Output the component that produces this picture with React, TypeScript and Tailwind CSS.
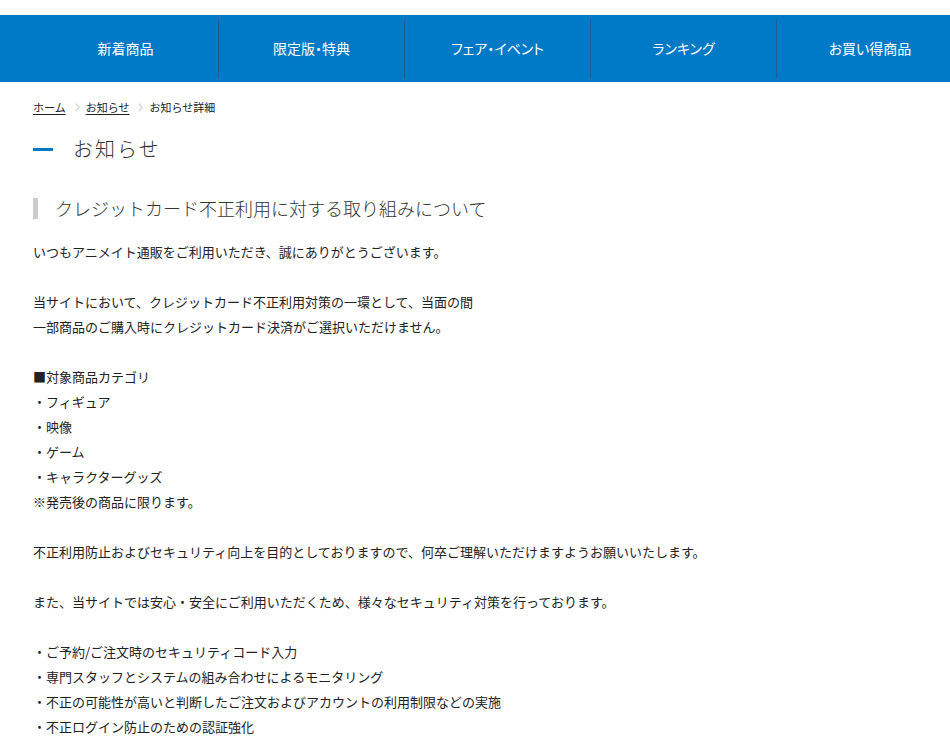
import React from 'react';

const navItems = ['新着商品', '限定版・特典', 'フェア・イベント', 'ランキング', 'お買い得商品'];

const fontStack = { fontFamily: '"Noto Sans CJK JP", "Noto Sans", sans-serif' };

const Chevron: React.FC = () => (
    <svg width="5" height="9" viewBox="0 0 5 9" className="ml-[9px] mr-[6px] shrink-0">
        <path d="M0.8 0.8 L4.2 4.5 L0.8 8.2" fill="none" stroke="#d6d6d6" strokeWidth="1.3" />
    </svg>
);

const bodyLines: string[] = [
    'いつもアニメイト通販をご利用いただき、誠にありがとうございます。',
    '',
    '当サイトにおいて、クレジットカード不正利用対策の一環として、当面の間',
    '一部商品のご購入時にクレジットカード決済がご選択いただけません。',
    '',
    '■対象商品カテゴリ',
    '・フィギュア',
    '・映像',
    '・ゲーム',
    '・キャラクターグッズ',
    '※発売後の商品に限ります。',
    '',
    '不正利用防止およびセキュリティ向上を目的としておりますので、何卒ご理解いただけますようお願いいたします。',
    '',
    'また、当サイトでは安心・安全にご利用いただくため、様々なセキュリティ対策を行っております。',
    '',
    '・ご予約/ご注文時のセキュリティコード入力',
    '・専門スタッフとシステムの組み合わせによるモニタリング',
    '・不正の可能性が高いと判断したご注文およびアカウントの利用制限などの実施',
    '・不正ログイン防止のための認証強化',
];

export default function App() {
    return (
        <div className="min-h-[754px] bg-white text-[#222] overflow-hidden" style={fontStack}>
            {/* global nav */}
            <nav className="mt-[15px] h-[67px] bg-[#0079c6] flex pl-[33px] overflow-hidden">
                {navItems.map((item, i) => (
                    <div
                        key={item}
                        className={`w-[186px] shrink-0 flex items-center justify-center my-[4px] text-white text-[14px] [font-feature-settings:'palt'] ${i < navItems.length - 1 ? 'border-r border-[#1b5e92]' : ''}`}
                    >
                        {item}
                    </div>
                ))}
            </nav>

            <div className="pl-[33px] pr-[20px]">
                {/* breadcrumb */}
                <div className="flex items-center h-[16px] mt-[17px] text-[11px] leading-none text-[#222]">
                    <a className="underline underline-offset-2">ホーム</a>
                    <Chevron />
                    <a className="underline underline-offset-2">お知らせ</a>
                    <Chevron />
                    <span>お知らせ詳細</span>
                </div>

                {/* page heading */}
                <div className="flex items-center mt-[19px] h-[30px]">
                    <span className="block w-[20px] h-[3px] bg-[#0079c6]" />
                    <h1 className="ml-[20px] text-[20px] font-light tracking-[2px] text-[#333]">お知らせ</h1>
                </div>

                {/* article title */}
                <div className="flex items-center mt-[33px] h-[22px]">
                    <span className="block w-[5px] h-[21px] bg-[#cccccc]" />
                    <h2 className="ml-[17px] text-[18px] font-light text-[#333]">クレジットカード不正利用に対する取り組みについて</h2>
                </div>

                {/* body */}
                <div className="mt-[20px] text-[13px] leading-[25px]">
                    {bodyLines.map((line, i) => (
                        <p key={i} className="h-[25px] whitespace-nowrap">{line}</p>
                    ))}
                </div>
            </div>
        </div>
    );
}
